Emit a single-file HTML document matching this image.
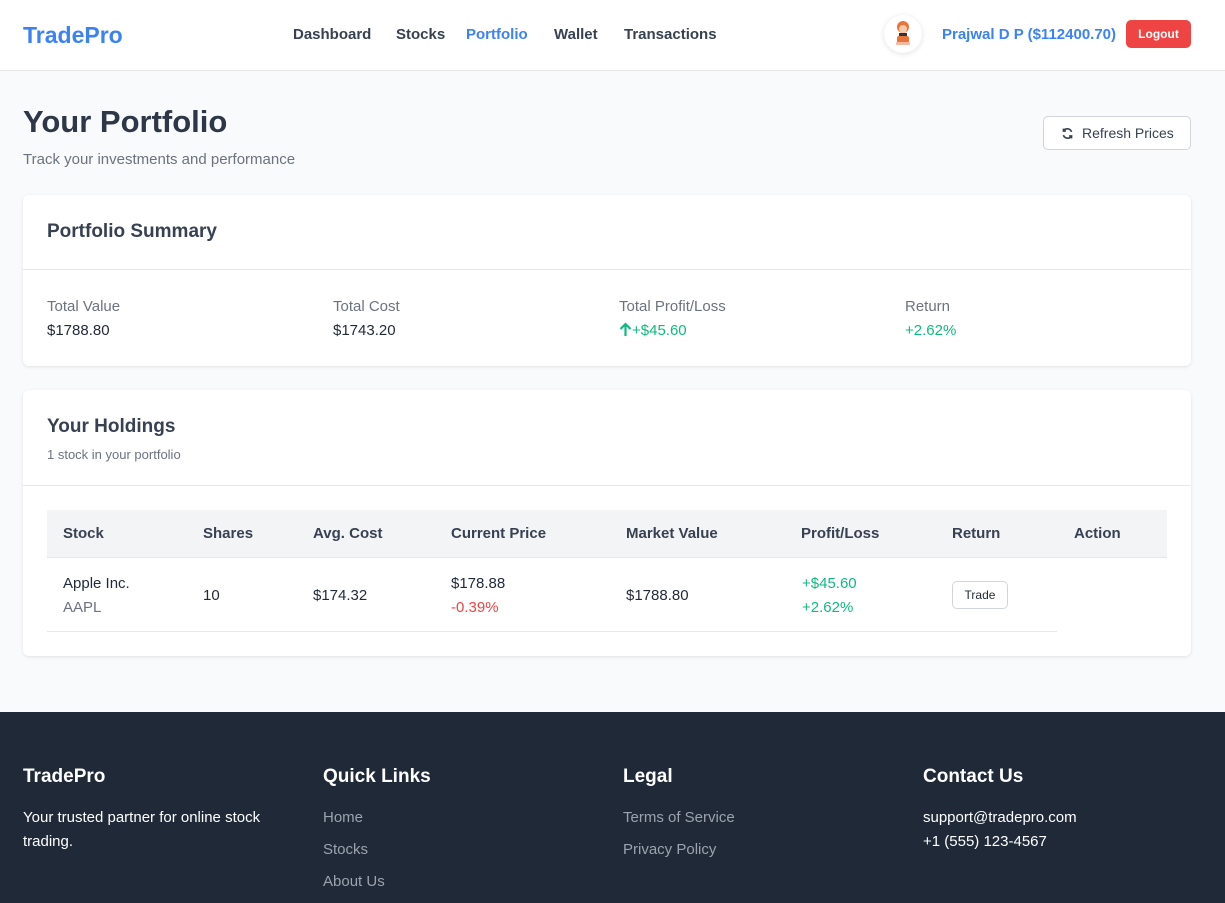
<!DOCTYPE html>
<html><head><meta charset="utf-8"><style>
*{box-sizing:border-box;margin:0;padding:0}
body{width:1225px;height:903px;overflow:hidden;background:#f9fafb;font-family:"Liberation Sans",Arial,sans-serif;color:#374151}
.nav{position:absolute;top:0;left:0;width:1225px;height:71px;background:#fff;border-bottom:1px solid #e5e7eb}
.logo{position:absolute;left:23px;top:22px;font-size:23px;font-weight:bold;color:#3b82f6}
.links{position:absolute;top:26px;font-size:15px;font-weight:bold;color:#374151}
.avatar{position:absolute;left:884px;top:15px;width:38px;height:38px;border-radius:50%;background:#fff;box-shadow:0 1px 6px rgba(0,0,0,.12)}
.user{position:absolute;left:942px;top:26px;font-size:15px;font-weight:bold;color:#3b82f6}
.logout{position:absolute;left:1126px;top:20px;width:65px;height:28px;background:#ef4444;color:#fff;border-radius:5px;font-size:12px;font-weight:bold;text-align:center;line-height:28px}
h1{position:absolute;left:23px;top:104px;font-size:31px;color:#2d3748}
.sub{position:absolute;left:23px;top:151px;font-size:15px;color:#6b7280}
.refresh{position:absolute;left:1043px;top:116px;width:148px;height:34px;border:1px solid #d1d5db;border-radius:5px;background:#fff;font-size:14px;line-height:32px;padding-left:38px;color:#374151}
.card{position:absolute;left:23px;width:1168px;background:#fff;border-radius:6px;box-shadow:0 1px 3px rgba(0,0,0,.1)}
.ct{font-size:19px;font-weight:bold;color:#374151;position:absolute;left:24px}
.lbl{position:absolute;font-size:15px;color:#6b7280}
.val{position:absolute;font-size:15px;color:#1f2937}
.th{position:absolute;top:120px;left:24px;width:1120px;height:48px;background:#f3f4f6;border-bottom:1px solid #e5e7eb}
.th span{position:absolute;top:15px;font-size:15px;font-weight:bold;color:#374151}
.td{position:absolute;font-size:15px;color:#1f2937}
.g{color:#10b981 !important}.r{color:#ef4444 !important}
.foot{position:absolute;left:0;top:712px;width:1225px;height:191px;background:#1f2937;color:#fff}
.foot h3{position:absolute;top:54px;font-size:19px}
.foot p{position:absolute;font-size:15px;line-height:24px}
.foot .gr{color:#9ca3af}
</style></head><body>
<div class="nav">
<div class="logo">TradePro</div>
<div class="links" style="left:293px">Dashboard</div>
<div class="links" style="left:396px">Stocks</div>
<div class="links" style="left:466px;color:#3b82f6">Portfolio</div>
<div class="links" style="left:554px">Wallet</div>
<div class="links" style="left:624px">Transactions</div>
<div class="avatar"><svg width="38" height="38" viewBox="0 0 38 38"><circle cx="19" cy="12" r="6" fill="#e8743b"/><circle cx="19" cy="14" r="4" fill="#f6c9a8"/><rect x="15" y="18" width="8" height="4" fill="#333"/><rect x="13" y="21" width="12" height="7" rx="2" fill="#e8743b"/><rect x="12" y="27" width="14" height="3" rx="1" fill="#f4b9a0"/></svg></div>
<div class="user">Prajwal D P ($112400.70)</div>
<div class="logout">Logout</div>
</div>
<h1>Your Portfolio</h1>
<div class="sub">Track your investments and performance</div>
<div class="refresh"><svg style="position:absolute;left:17px;top:10px" width="13" height="13" viewBox="0 0 16 16" fill="none" stroke="#374151" stroke-width="2"><path d="M13 6A5.5 5.5 0 0 0 3 5M3 2v3h3M3 10a5.5 5.5 0 0 0 10 1M13 14v-3h-3"/></svg>Refresh Prices</div>

<div class="card" style="top:195px;height:171px">
<div class="ct" style="top:26px">Portfolio Summary</div>
<div style="position:absolute;top:74px;left:0;width:100%;border-top:1px solid #e5e7eb"></div>
<div class="lbl" style="left:24px;top:103px">Total Value</div><div class="val" style="left:24px;top:127px">$1788.80</div>
<div class="lbl" style="left:310px;top:103px">Total Cost</div><div class="val" style="left:310px;top:127px">$1743.20</div>
<div class="lbl" style="left:596px;top:103px">Total Profit/Loss</div><div class="val g" style="left:596px;top:127px"><svg width="13" height="14" viewBox="0 0 13 14" style="vertical-align:-1px" fill="none" stroke="#10b981" stroke-width="2.2"><path d="M6.5 14V2M1.5 7l5-5 5 5"/></svg>+$45.60</div>
<div class="lbl" style="left:882px;top:103px">Return</div><div class="val g" style="left:882px;top:127px">+2.62%</div>
</div>

<div class="card" style="top:390px;height:266px">
<div class="ct" style="top:26px">Your Holdings</div>
<div style="position:absolute;left:24px;top:57px;font-size:13px;color:#6b7280">1 stock in your portfolio</div>
<div style="position:absolute;top:95px;left:0;width:100%;border-top:1px solid #e5e7eb"></div>
<div class="th"><span style="left:16px">Stock</span><span style="left:156px">Shares</span><span style="left:266px">Avg. Cost</span><span style="left:404px">Current Price</span><span style="left:579px">Market Value</span><span style="left:754px">Profit/Loss</span><span style="left:905px">Return</span><span style="left:1027px">Action</span></div>
<div class="td" style="left:40px;top:185px">Apple Inc.</div><div class="td" style="left:40px;top:209px;color:#6b7280">AAPL</div>
<div class="td" style="left:180px;top:197px">10</div>
<div class="td" style="left:290px;top:197px">$174.32</div>
<div class="td" style="left:428px;top:185px">$178.88</div><div class="td r" style="left:428px;top:209px">-0.39%</div>
<div class="td" style="left:603px;top:197px">$1788.80</div>
<div class="td g" style="left:779px;top:185px">+$45.60</div><div class="td g" style="left:779px;top:209px">+2.62%</div>
<div style="position:absolute;left:929px;top:191px;width:56px;height:28px;border:1px solid #d1d5db;border-radius:5px;font-size:12px;text-align:center;line-height:26px;color:#1f2937">Trade</div>
<div style="position:absolute;left:24px;top:241px;width:1010px;border-top:1px solid #e5e7eb"></div>
</div>

<div class="foot">
<h3 style="left:23px">TradePro</h3>
<p style="left:23px;top:94px;width:270px">Your trusted partner for online stock trading.</p>
<h3 style="left:323px">Quick Links</h3>
<p class="gr" style="left:323px;top:90px;line-height:32px">Home<br>Stocks<br>About Us</p>
<h3 style="left:623px">Legal</h3>
<p class="gr" style="left:623px;top:90px;line-height:32px">Terms of Service<br>Privacy Policy</p>
<h3 style="left:923px">Contact Us</h3>
<p style="left:923px;top:94px">support@tradepro.com<br>+1 (555) 123-4567</p>
</div>
</body></html>
